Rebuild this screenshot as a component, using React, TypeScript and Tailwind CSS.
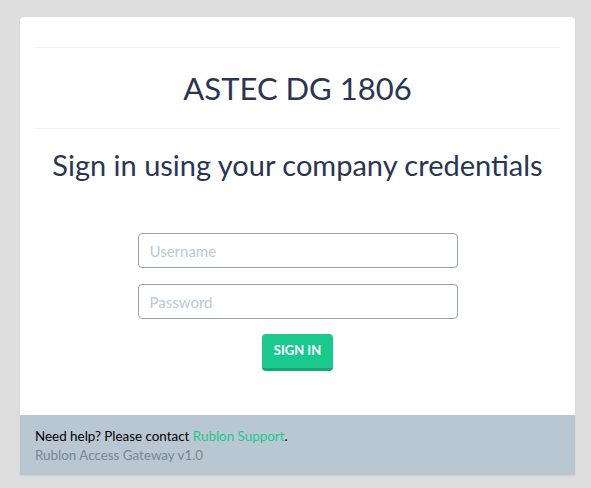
import React from 'react';

const App = () => {
  return (
    <div className="min-h-screen bg-[#dedede] pt-[17px] font-['Lato',sans-serif]">
      <div className="ml-[20px] w-[555px] bg-white rounded-t-[4px] shadow-[0_1px_2px_rgba(0,0,0,0.08)]">
        <div className="px-[15px] pt-[30px]">
          <div className="border-t border-[#eceff3]" />
          <h1 className="h-[80px] flex items-center justify-center text-[31px] text-[#2a3553]">
            ASTEC DG 1806
          </h1>
          <div className="border-t border-[#eceff3]" />
          <h2 className="mt-[17px] text-center text-[29px] leading-[38px] text-[#2a3553]">
            Sign in using your company credentials
          </h2>
          <form className="mt-[49px] pb-[44px] flex flex-col items-center">
            <input
              type="text"
              placeholder="Username"
              className="w-[320px] h-[35px] px-[11px] text-[15px] rounded-[4px] border border-[#9aa3ad] placeholder-[#b8c9da] outline-none"
            />
            <input
              type="password"
              placeholder="Password"
              className="mt-[16px] w-[320px] h-[35px] px-[11px] text-[15px] rounded-[4px] border border-[#9aa3ad] placeholder-[#b8c9da] outline-none"
            />
            <button
              type="button"
              className="mt-[15px] w-[71px] h-[37px] rounded-[4px] bg-[#1bc98e] border-b-[3px] border-[#14a874] text-white text-[13px] font-bold"
            >
              SIGN IN
            </button>
          </form>
        </div>
        <div className="bg-[#b8c7d2] h-[60px] px-[15px] pt-[12px] text-[13.4px] leading-[19px]">
          <p className="text-black">
            Need help? Please contact <span className="text-[#1bc98e]">Rublon Support</span>.
          </p>
          <p className="text-[#7b868f]">Rublon Access Gateway v1.0</p>
        </div>
      </div>
    </div>
  );
};

export default App;
